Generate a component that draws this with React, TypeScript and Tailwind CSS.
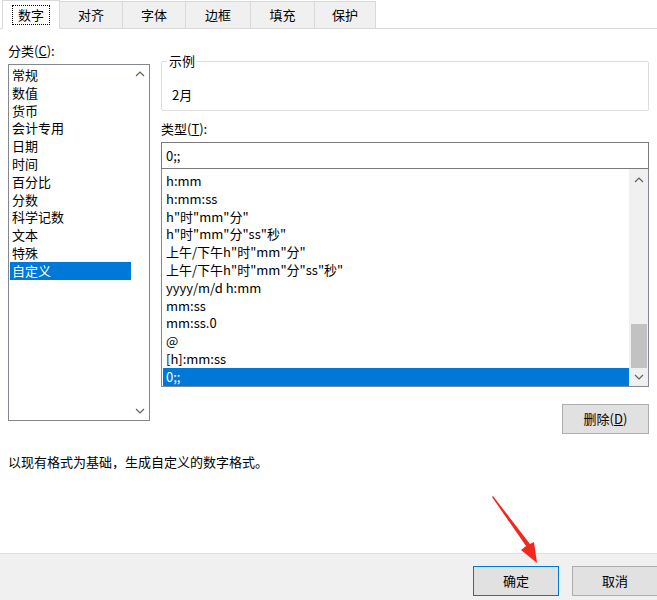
import React from "react";

const cats = ["常规","数值","货币","会计专用","日期","时间","百分比","分数","科学记数","文本","特殊","自定义"];
const fmts = ["h:mm","h:mm:ss",'h"时"mm"分"','h"时"mm"分"ss"秒"','上午/下午h"时"mm"分"','上午/下午h"时"mm"分"ss"秒"',"yyyy/m/d h:mm","mm:ss","mm:ss.0","@","[h]:mm:ss","0;;"];

const Up = () => (<svg width="10" height="6" viewBox="0 0 10 6"><path d="M1 5 L5 1 L9 5" fill="none" stroke="#606060" strokeWidth="1.2"/></svg>);
const Down = () => (<svg width="10" height="6" viewBox="0 0 10 6"><path d="M1 1 L5 5 L9 1" fill="none" stroke="#606060" strokeWidth="1.2"/></svg>);

export default function App() {
  const tabs = [["数字",58],["对齐",63],["字体",63],["边框",65],["填充",64],["保护",61]] as const;
  return (
    <div className="relative w-[657px] h-[600px] bg-white text-[13px] text-black overflow-hidden flex flex-col" style={{fontFamily: '"Noto Sans CJK SC", "Noto Sans", sans-serif'}}>
      <div className="flex h-[29px] border-b border-[#d9d9d9] pl-[2px] items-end">
        {tabs.map(([t,w],i)=>(
          <div key={t} style={{width:w}} className={i===0 ? "h-[29px] bg-white border border-[#d9d9d9] border-b-white -mb-px flex items-center justify-center" : "h-[27px] bg-[#f0f0f0] border border-[#d9d9d9] border-l-0 border-b-0 flex items-center justify-center"}>
            <span className={i===0 ? "outline-1 outline-dotted outline-black px-[5px] leading-[18px]" : ""}>{t}</span>
          </div>
        ))}
      </div>
      <div className="flex px-[8px] pt-[13px] gap-[11px]">
        <div className="flex flex-col w-[142px]">
          <div className="leading-[18px] mb-[4px]">分类(<u>C</u>):</div>
          <div className="h-[357px] border border-[#828790] flex">
            <div className="flex-1 pt-[1px]">
              {cats.map((c,i)=>(
                <div key={c} className={"h-[17.8px] leading-[17.8px] pl-[2px] ml-[1px] " + (i===11 ? "bg-[#0078d7] text-white" : "")}>{c}</div>
              ))}
            </div>
            <div className="w-[18px] flex flex-col justify-between items-center py-[6px]"><Up/><Down/></div>
          </div>
        </div>
        <div className="flex flex-col flex-1 w-[489px]">
          <div className="relative mt-[19px] h-[50px] border border-[#dcdcdc] rounded-[2px]">
            <span className="absolute -top-[10px] left-[5px] bg-white px-[2px] leading-[18px]">示例</span>
            <div className="pl-[10px] pt-[24px] leading-[18px]">2月</div>
          </div>
          <div className="mt-[9px] leading-[18px]">类型(<u>T</u>):</div>
          <div className="mt-[4px] h-[27px] border border-[#7a7a7a] pl-[4px] leading-[25px]">0;;</div>
          <div className="h-[218px] border border-[#828790] border-t-0 flex">
            <div className="flex-1 pt-[3px] pl-[1px]">
              {fmts.map((f,i)=>(
                <div key={f} className={"h-[17.8px] leading-[17.8px] pl-[3px] " + (i===11 ? "bg-[#0078d7] text-white" : "")}>{f}</div>
              ))}
            </div>
            <div className="w-[19px] bg-[#f0f0f0] flex flex-col items-center">
              <div className="h-[18px] flex items-center mt-[2px]"><Up/></div>
              <div className="flex-1"/>
              <div className="w-[16px] h-[44px] bg-[#c2c2c2]"/>
              <div className="h-[18px] flex items-center"><Down/></div>
            </div>
          </div>
          <div className="flex justify-end mt-[17px]">
            <div className="w-[87px] h-[30px] bg-[#e1e1e1] border border-[#adadad] flex items-center justify-center">删除(<u>D</u>)</div>
          </div>
        </div>
      </div>
      <div className="px-[8px] mt-[19px] leading-[18px]">以现有格式为基础，生成自定义的数字格式。</div>
      <div className="flex-1"/>
      <div className="h-[47px] bg-[#f0f0f0] border-t border-[#dfdfdf] flex items-start pt-[12px] pl-[473px] gap-[13px]">
        <div className="w-[86px] h-[30px] bg-[#e1e1e1] border border-[#0078d7] flex items-center justify-center shrink-0">确定</div>
        <div className="w-[86px] h-[30px] bg-[#e1e1e1] border border-[#adadad] flex items-center justify-center shrink-0">取消</div>
      </div>
      <svg className="absolute left-0 top-0 pointer-events-none" width="657" height="600">
        <path d="M492 497 L526 546 L521 550 L537 563 L534 542 L530 544 L493 496 Z" fill="#f2281e"/>
      </svg>
    </div>
  );
}
